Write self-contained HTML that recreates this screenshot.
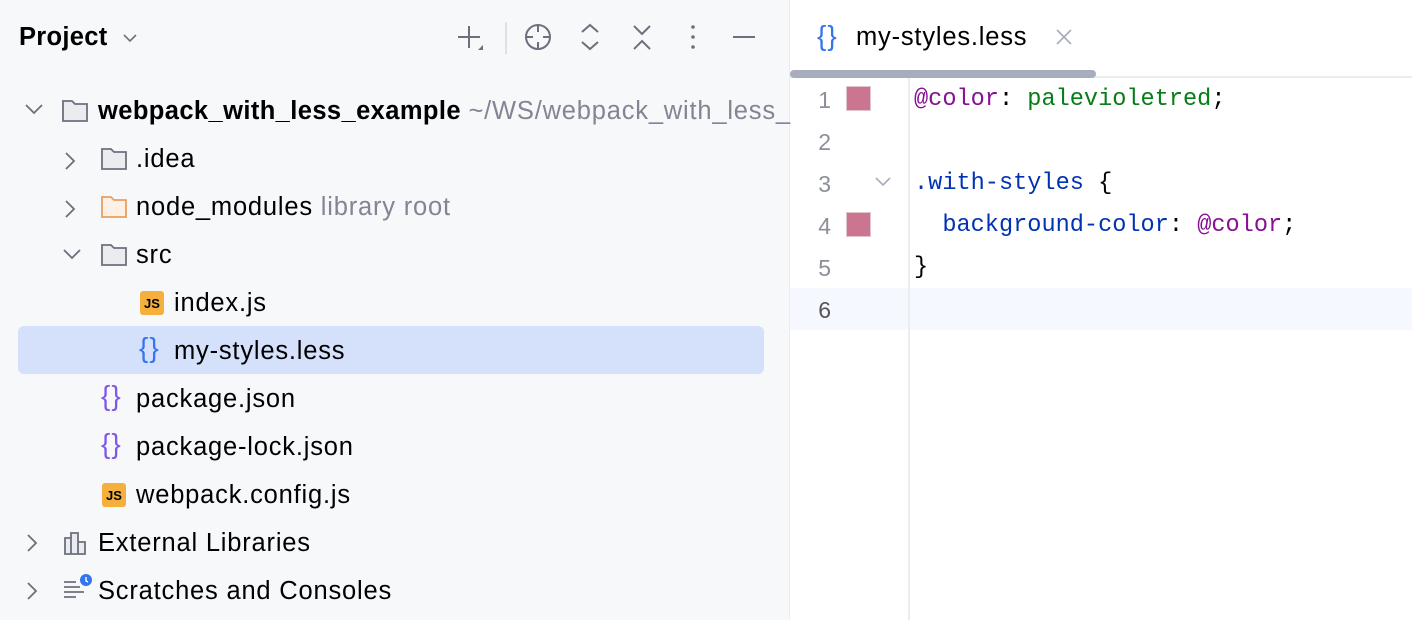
<!DOCTYPE html>
<html><head><style>
body{margin:0;width:1412px;height:620px;overflow:hidden;font-family:"Liberation Sans",sans-serif;background:#fff;position:relative}
.left{position:absolute;left:0;top:0;width:789px;height:620px;background:#f7f8fa;border-right:1px solid #ebecf0}
.t{position:absolute;font-size:25.5px;color:#000;white-space:nowrap;line-height:30px;letter-spacing:0.8px}
.g{color:#818594}
.ic{position:absolute}
.js{position:absolute;width:24px;height:24px;background:#f4af3d;border-radius:3px;font:bold 13px "Liberation Sans",sans-serif;color:#000;text-align:center;line-height:25px}
.code{position:absolute;font-family:"Liberation Mono",monospace;font-size:23.6px;line-height:42px;white-space:pre}
.ln{position:absolute;left:790px;width:41px;text-align:right;font-size:23px;color:#8c8f99;line-height:42px;font-family:"Liberation Sans",sans-serif}
.sw{position:absolute;left:846px;width:25px;height:25px;background:#cc7590;border:1px solid #e0c5cd;box-sizing:border-box}
</style></head><body>
<div class="left"></div>
<div class="t" style="left:19px;top:22px;font-weight:bold;letter-spacing:0.3px">Project</div>
<svg class="ic" style="left:120px;top:28px" width="20" height="20"><path d="M4 7l6 6 6-6" fill="none" stroke="#6c707e" stroke-width="1.6"/></svg>
<svg class="ic" style="left:455px;top:22px" width="300" height="32" fill="none" stroke="#6c707e" stroke-width="2">
<path d="M3 15h22M14 4v22"/><path d="M23 28l5-5v5z" fill="#6c707e" stroke="none"/>
<path d="M51 0v32" stroke="#dfe1e5"/>
<circle cx="83" cy="15" r="12"/><path d="M83 3v7M83 20v7M71 15h7M88 15h7"/>
<path d="M127 10l8-7 8 7M127 20l8 7 8-7"/>
<path d="M179 4l8 8 8-8M179 27l8-8 8 8"/>
<circle cx="238" cy="5" r="1.8" fill="#6c707e" stroke="none"/><circle cx="238" cy="15" r="1.8" fill="#6c707e" stroke="none"/><circle cx="238" cy="25" r="1.8" fill="#6c707e" stroke="none"/>
<path d="M278 15h26"/>
</svg>
<svg class="ic" style="left:0;top:90px" width="120" height="530" fill="none" stroke="#6c707e" stroke-width="1.8">
<path d="M26 15l8 8 8-8"/>
<path d="M66 63l8 8-8 8M66 111l8 8-8 8"/>
<path d="M64 160l8 8 8-8"/>
<path d="M28 445l8 8-8 8M28 493l8 8-8 8"/>
</svg>
<svg class="ic" style="left:60px;top:97px" width="30" height="28"><path d="M3 4h9l3 3h12v17H3z" fill="#ebecf0" stroke="#6c707e" stroke-width="1.8"/></svg>
<svg class="ic" style="left:99px;top:145px" width="30" height="28"><path d="M3 4h9l3 3h12v17H3z" fill="#ebecf0" stroke="#6c707e" stroke-width="1.8"/></svg>
<svg class="ic" style="left:99px;top:193px" width="30" height="28"><path d="M3 4h9l3 3h12v17H3z" fill="#fdf0e4" stroke="#e99f5e" stroke-width="1.8"/></svg>
<svg class="ic" style="left:99px;top:241px" width="30" height="28"><path d="M3 4h9l3 3h12v17H3z" fill="#ebecf0" stroke="#6c707e" stroke-width="1.8"/></svg>
<div class="t" style="left:98px;top:96px;font-weight:bold;letter-spacing:0.4px">webpack_with_less_example <span class="g" style="font-weight:normal;letter-spacing:0.8px">~/WS/webpack_with_less_</span></div>
<div class="t" style="left:136px;top:144px">.idea</div>
<div class="t" style="left:136px;top:192px">node_modules <span class="g">library root</span></div>
<div class="t" style="left:136px;top:240px">src</div>
<div class="js" style="left:140px;top:291px">JS</div>
<div class="t" style="left:174px;top:288px">index.js</div>
<div style="position:absolute;left:18px;top:326px;width:746px;height:48px;background:#d5e1fb;border-radius:6px"></div>
<div class="t" style="left:139px;top:333px;color:#3574f0;font-size:28px;letter-spacing:1px">{}</div>
<div class="t" style="left:174px;top:336px">my-styles.less</div>
<div class="t" style="left:101px;top:381px;color:#8157e6;font-size:28px;letter-spacing:1px">{}</div>
<div class="t" style="left:136px;top:384px">package.json</div>
<div class="t" style="left:101px;top:429px;color:#8157e6;font-size:28px;letter-spacing:1px">{}</div>
<div class="t" style="left:136px;top:432px">package-lock.json</div>
<div class="js" style="left:102px;top:483px">JS</div>
<div class="t" style="left:136px;top:480px">webpack.config.js</div>
<svg class="ic" style="left:62px;top:530px" width="30" height="28" fill="none" stroke="#6c707e" stroke-width="1.8"><path d="M3 8h6v16H3zM9 3h7v21H9zM16 12h7v12h-7z" fill="#ebecf0"/></svg>
<div class="t" style="left:98px;top:528px">External Libraries</div>
<svg class="ic" style="left:62px;top:572px" width="32" height="32" stroke="#6c707e" stroke-width="1.8"><path d="M2 10h12M2 15h16M2 20h20M2 25h12"/><circle cx="24" cy="8" r="6" fill="#3574f0" stroke="none"/><path d="M24 5v4l2 1" stroke="#fff" stroke-width="1.4" fill="none"/></svg>
<div class="t" style="left:98px;top:576px">Scratches and Consoles</div>
<div class="t" style="left:817px;top:21px;color:#3574f0;font-size:28px;letter-spacing:1px">{}</div>
<div class="t" style="left:856px;top:22px">my-styles.less</div>
<svg class="ic" style="left:1055px;top:28px" width="18" height="18"><path d="M2 2l14 14M16 2L2 16" stroke="#a8adbd" stroke-width="1.6"/></svg>
<div style="position:absolute;left:790px;top:76px;width:622px;height:2px;background:#ebecf0"></div>
<div style="position:absolute;left:790px;top:70px;width:306px;height:8px;background:#a8adbd;border-radius:4px"></div>
<div style="position:absolute;left:790px;top:288px;width:622px;height:42px;background:#f5f8fe"></div>
<div style="position:absolute;left:908px;top:78px;width:2px;height:542px;background:#ebecf0"></div>
<div class="ln" style="top:79px">1</div><div class="ln" style="top:121px">2</div><div class="ln" style="top:163px">3</div><div class="ln" style="top:205px">4</div><div class="ln" style="top:247px">5</div><div class="ln" style="top:289px;color:#555">6</div>
<div class="sw" style="top:86px"></div><div class="sw" style="top:212px"></div>
<svg class="ic" style="left:874px;top:176px" width="18" height="12"><path d="M2 2l7 7 7-7" fill="none" stroke="#a8adbd" stroke-width="1.6"/></svg>
<div class="code" style="left:914px;top:79px"><span style="color:#871094">@color</span>: <span style="color:#067d17">palevioletred</span>;</div>
<div class="code" style="left:914px;top:163px"><span style="color:#0033b3">.with-styles</span> {</div>
<div class="code" style="left:914px;top:205px">  <span style="color:#0033b3">background-color</span>: <span style="color:#871094">@color</span>;</div>
<div class="code" style="left:914px;top:247px">}</div>
</body></html>
